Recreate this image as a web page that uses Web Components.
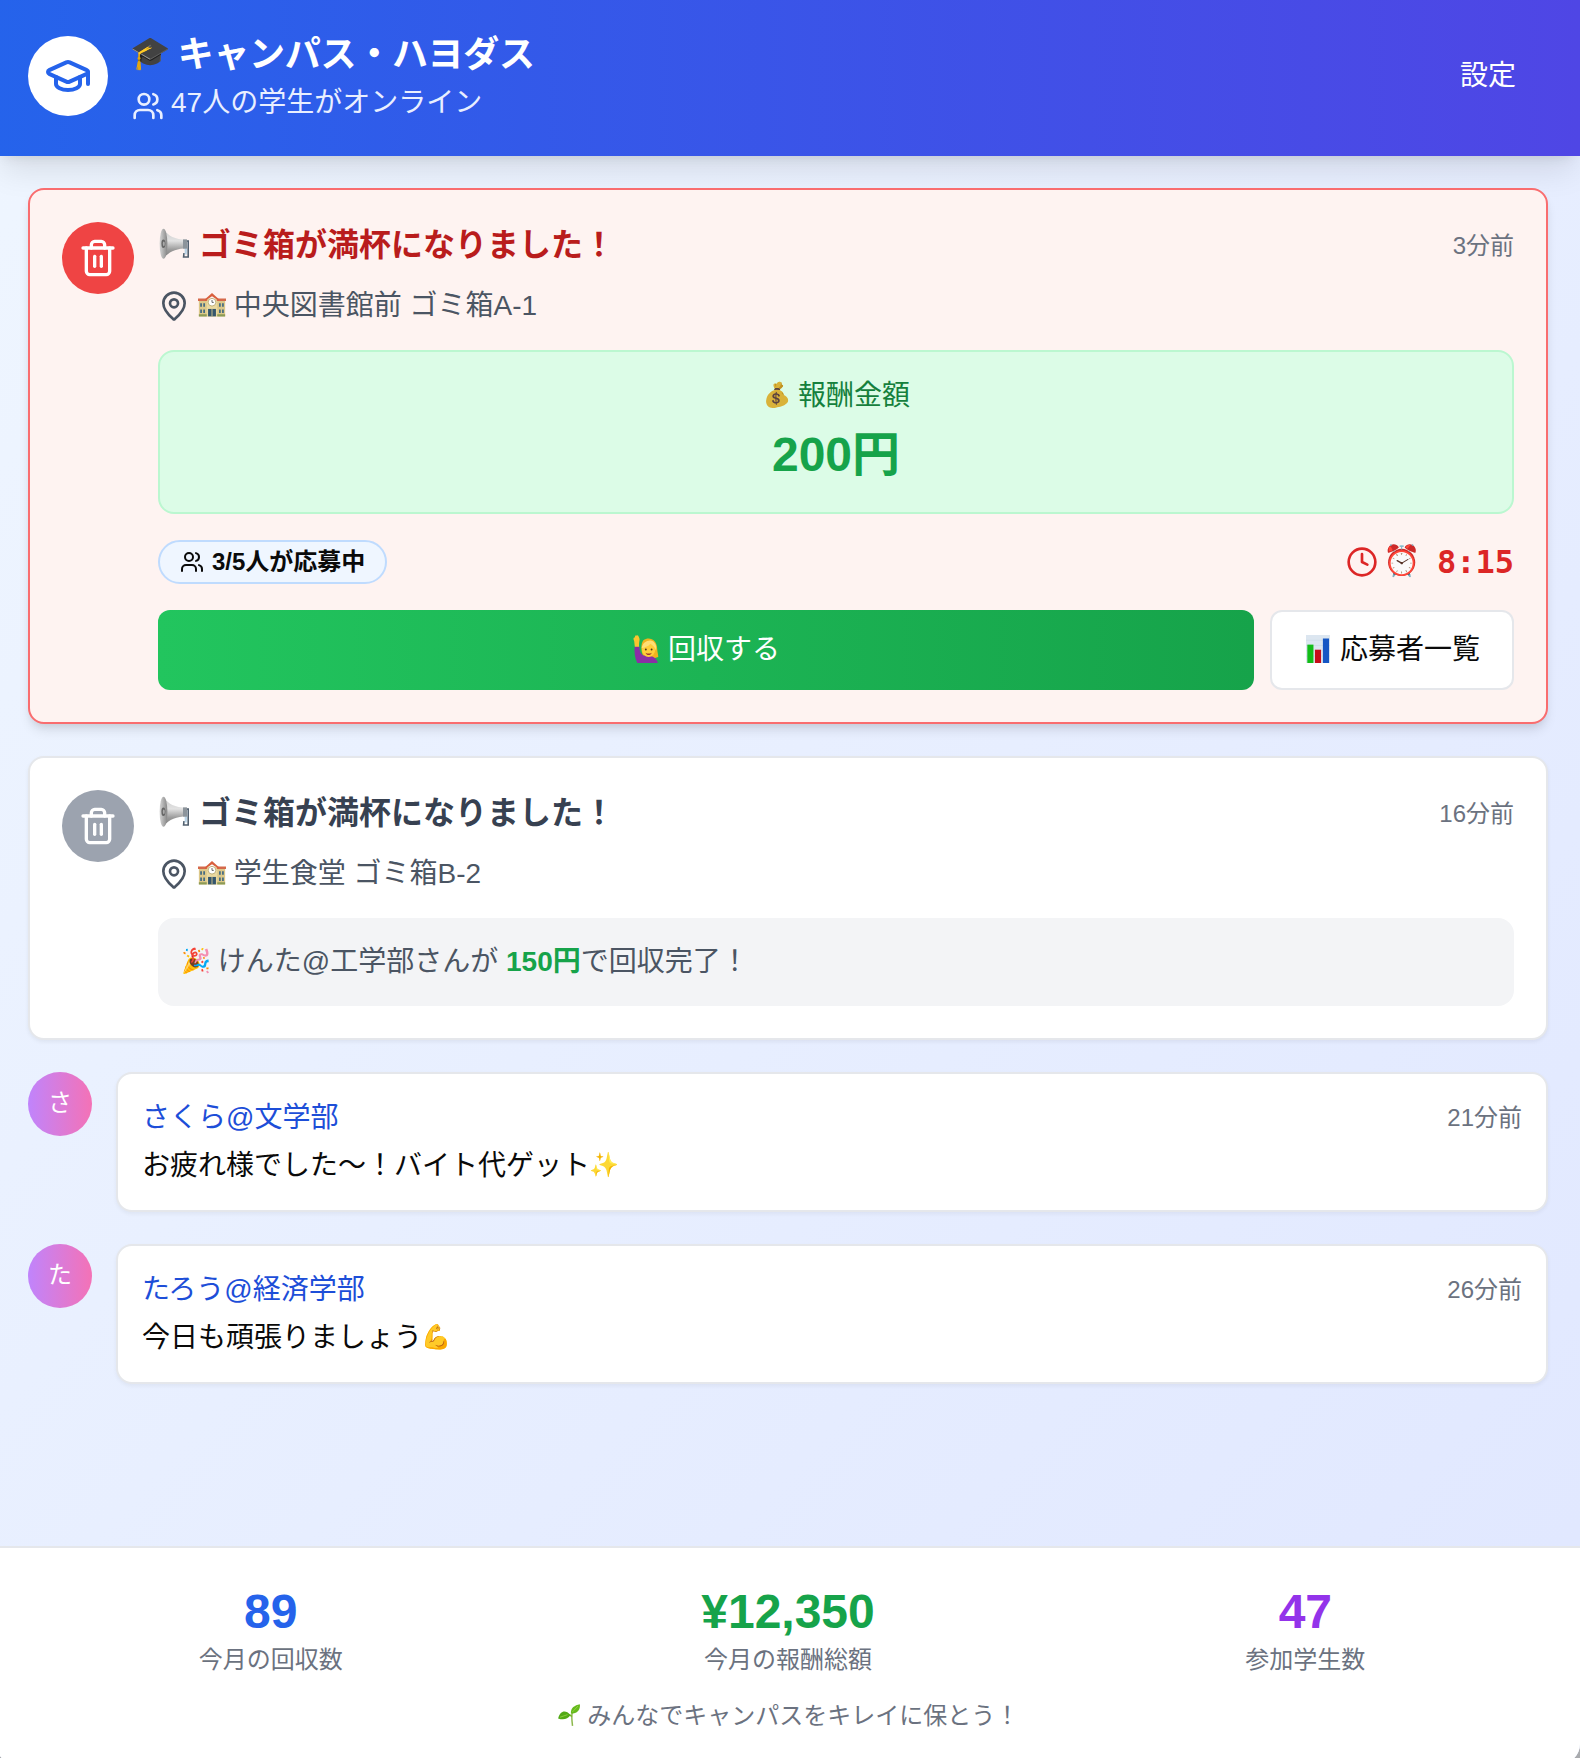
<!DOCTYPE html>
<html lang="ja">
<head>
<meta charset="utf-8">
<title>キャンパス・ハヨダス</title>
<style>
  html, body { margin: 0; height: 1758px; overflow: hidden; background: #a9abae; }
  body { font-family: "Liberation Sans", "Noto Sans CJK JP", sans-serif; font-size: 28px; line-height: 40px; color: #0a0a0a; }
</style>
</head>
<body>
<campus-app>
  <app-header slot="header">
    <span slot="title"><e-moji kind="cap">🎓</e-moji> キャンパス・ハヨダス</span>
    <span slot="status">47人の学生がオンライン</span>
    <span slot="action">設定</span>
  </app-header>

  <bin-alert active>
    <span slot="title"><color-icon name="horn"></color-icon> ゴミ箱が満杯になりました！</span>
    <span slot="time">3分前</span>
    <span slot="place"><color-icon name="school"></color-icon> 中央図書館前 ゴミ箱A-1</span>
    <reward-box><span slot="label"><e-moji kind="bag">💰</e-moji> 報酬金額</span>200円</reward-box>
    <entry-row><span slot="count">3/5人が応募中</span><span slot="timer"><e-moji kind="clock">⏰</e-moji> 8:15</span></entry-row>
    <action-row><span slot="main"><color-icon name="woman"></color-icon> 回収する</span><span slot="side"><color-icon name="chart"></color-icon> 応募者一覧</span></action-row>
  </bin-alert>

  <bin-alert>
    <span slot="title"><color-icon name="horn"></color-icon> ゴミ箱が満杯になりました！</span>
    <span slot="time">16分前</span>
    <span slot="place"><color-icon name="school"></color-icon> 学生食堂 ゴミ箱B-2</span>
    <done-note><e-moji>🎉</e-moji> けんた@工学部さんが <b>150円</b>で回収完了！</done-note>
  </bin-alert>

  <chat-message>
    <span slot="avatar">さ</span><span slot="name">さくら@文学部</span><span slot="time">21分前</span>お疲れ様でした〜！バイト代ゲット<e-moji>✨</e-moji>
  </chat-message>
  <chat-message>
    <span slot="avatar">た</span><span slot="name">たろう@経済学部</span><span slot="time">26分前</span>今日も頑張りましょう<e-moji>💪</e-moji>
  </chat-message>

  <stats-footer slot="footer">
    <stat-item style="--c:#2563eb"><span slot="value">89</span>今月の回収数</stat-item>
    <stat-item style="--c:#16a34a"><span slot="value">¥12,350</span>今月の報酬総額</stat-item>
    <stat-item style="--c:#9333ea"><span slot="value">47</span>参加学生数</stat-item>
    <span slot="note"><color-icon name="sprout"></color-icon> みんなでキャンパスをキレイに保とう！</span>
  </stats-footer>
</campus-app>

<script>
const ICONS = {
  cap: '<path d="M21.42 10.922a1 1 0 0 0-.019-1.838L12.83 5.18a2 2 0 0 0-1.66 0L2.6 9.08a1 1 0 0 0 0 1.832l8.57 3.908a2 2 0 0 0 1.66 0z"/><path d="M22 10v6"/><path d="M6 12.5V16a6 3 0 0 0 12 0v-3.5"/>',
  users: '<path d="M16 21v-2a4 4 0 0 0-4-4H6a4 4 0 0 0-4 4v2"/><circle cx="9" cy="7" r="4"/><path d="M22 21v-2a4 4 0 0 0-3-3.87"/><path d="M16 3.13a4 4 0 0 1 0 7.75"/>',
  trash: '<path d="M3 6h18"/><path d="M19 6v14c0 1-1 2-2 2H7c-1 0-2-1-2-2V6"/><path d="M8 6V4c0-1 1-2 2-2h4c1 0 2 1 2 2v2"/><path d="M10 11v6"/><path d="M14 11v6"/>',
  pin: '<path d="M20 10c0 4.993-5.539 10.193-7.399 11.799a1 1 0 0 1-1.202 0C9.539 20.193 4 14.993 4 10a8 8 0 0 1 16 0"/><circle cx="12" cy="10" r="3"/>',
  clock: '<circle cx="12" cy="12" r="10"/><path d="M12 6v6l4 2"/>'
};
// Multicolour pictures, drawn on a 32-unit grid
const PICTURES = {
  horn: `<defs><linearGradient id="g" x1="0" y1="0" x2="0" y2="1"><stop offset="0" stop-color="#c9c9c9"/><stop offset=".4" stop-color="#e2e2e2"/><stop offset=".7" stop-color="#9b9b9b"/><stop offset="1" stop-color="#787878"/></linearGradient>
    <linearGradient id="b" x1="0" y1="0" x2="1" y2="0"><stop offset="0" stop-color="#d5d5d5"/><stop offset="1" stop-color="#868686"/></linearGradient></defs>
    <path d="M25 13h5.2v16h-4.6l.4-4" fill="none" stroke="#51606f" stroke-width="1.6"/><path d="M26.4 14.5h2.8l-.4 12h-2z" fill="#b9d3e6"/>
    <path d="M5.5 1C10 8 17 11.5 28.5 11.6v8.6C19 20.6 11 23 5.5 30.6z" fill="url(#g)"/><path d="M25 11.4h4v9.2h-4z" fill="#8c949b"/>
    <ellipse cx="5.5" cy="15.8" rx="3.9" ry="15" fill="url(#b)"/><ellipse cx="5.4" cy="15.8" rx="2" ry="4.2" fill="#666"/><ellipse cx="5.8" cy="15.8" rx="1" ry="2.4" fill="#aaa"/>`,
  school: `<rect x="1" y="10" width="30" height="19" fill="#dcc88a"/><rect x="10" y="9" width="12" height="20" fill="#ead9a0"/>
    <path d="M0 8.5h10.5v3H0zM21.500 8.500H32v3H21.500z" fill="#d5694b"/><path d="M16 2.200 24 9.500v1.800L16 6 8 11.300V9.500z" fill="#d95f3d"/>
    <circle cx="16" cy="12.800" r="4.400" fill="#fff" stroke="#a89555" stroke-width=".8"/><path d="M16 10.300v2.700h2" fill="none" stroke="#444" stroke-width=".9"/>
    <path d="M2.500 14h2v4h-2zM6 14h2v4H6zM24 14h2v4h-2zM27.500 14h2v4h-2zM2.500 21h2v4h-2zM6 21h2v4H6zM24 21h2v4h-2zM27.500 21h2v4h-2z" fill="#456b82"/>
    <rect x="11.500" y="20.500" width="9" height="8.500" fill="#35566d"/><path d="M16 20.500V29" stroke="#d9c98f" stroke-width="1"/><path d="M1 26.500h9V29H1zM22 26.500h9V29h-9z" fill="#8d9b55"/>`,
  chart: `<rect x="2.300" y="0" width="27.400" height="32" fill="#dce6f0"/><path d="M2.300 6h27.400M2.300 12h27.400M2.300 18h27.400M2.300 24h27.400" stroke="#c8d6e4" stroke-width=".6"/>
    <rect x="3.800" y="11" width="7" height="21" fill="#12bd18"/><rect x="12.500" y="16.800" width="7" height="15.200" fill="#c70d19"/><rect x="21.600" y="4" width="7" height="28" fill="#1556c4"/>`,
  woman: `<path d="M13 6c7-5 16 0 15.800 10 .2 4 1.200 6 1.200 9-5 2-14 2-17-1-3-5-3-14 0-18z" fill="#f2b31d"/>
    <path d="M3 13h5.500c0 6 1.500 9 5.500 10.500 8-.5 14 1.500 15.500 8.500H6C3 26 2.600 19 3 13z" fill="#8a2fa5"/>
    <path d="M3.200 13.500 2.500 7C1 4 2 2.500 3 3l.8-2.500 1.400 0L6 .3l1.200.6L8.500 4c.6 2-.7 4-.4 9.500z" fill="#fbc52e"/>
    <ellipse cx="19" cy="16.500" rx="7.600" ry="8.700" fill="#ffce3a"/><path d="M11 15c1-8 10-11 14-7 3 3 3 6 2.500 10-1-4-4-6-6.500-8-2 3-6 4-10 5z" fill="#ffdf75"/>
    <circle cx="15.800" cy="16.500" r="1.100" fill="#54351b"/><circle cx="22.400" cy="16.500" r="1.100" fill="#54351b"/><path d="M15.500 20.200c2 1.300 5 1.300 7 0-.8 3.500-6 3.500-7 0z" fill="#a3392a"/>`,
  sprout: `<path d="M20.500 12c-1.500 5-.8 11 .2 18.500" fill="none" stroke="#8cb84c" stroke-width="2"/><path d="M20 18c-2-2-4-3-7-2" fill="none" stroke="#79b52a" stroke-width="2"/>
    <path d="M18.500 14c-.5-8 5-11 12-12.500C31.500 9 27 14 18.500 14z" fill="#66ba1d"/><path d="M18 16C11 8 4 11 1.500 20.500 8 23 14 22 18 16z" fill="#52a916"/>
    <path d="M20.500 12 28 4M4 19l10-3.500" stroke="#9bd94a" stroke-width="1"/>`
};
const define = (name, html, setup) => customElements.define(name, class extends HTMLElement {
  constructor() { super(); this.attachShadow({ mode: 'open' }); }
  connectedCallback() {
    this.shadowRoot.innerHTML = html;
    if (setup) setup(this);
  }
});

define('line-icon', `<style>
  :host { display: block; flex: none; width: var(--s, 32px); height: var(--s, 32px); }
  svg { display: block; width: 100%; height: 100%; fill: none; stroke: currentColor; stroke-width: 2; stroke-linecap: round; stroke-linejoin: round; }
</style><svg viewBox="0 0 24 24"></svg>`, el => {
  el.shadowRoot.querySelector('svg').innerHTML = ICONS[el.getAttribute('name')];
});

define('color-icon', `<style>
  :host { display: inline-block; width: 1em; height: 1em; vertical-align: -.13em; }
  svg { display: block; width: 100%; height: 100%; }
</style><svg viewBox="0 0 32 32"></svg>`, el => {
  el.shadowRoot.querySelector('svg').innerHTML = PICTURES[el.getAttribute('name')];
});

define('e-moji', `<style>
  :host { display: inline-flex; width: 1em; height: 1em; line-height: 1em; justify-content: center; vertical-align: .06em; white-space: nowrap; }
  span { display: block; font-size: .86em; font-family: "Noto Color Emoji", sans-serif; font-weight: 400; }
  :host([kind="cap"]) { vertical-align: .09em; }
  :host([kind="cap"]) span { font-size: .9em; }
  :host([kind="bag"]) span { font-size: .8em; transform: rotate(-14deg); filter: brightness(.88) saturate(.85); }
  :host([kind="clock"]) span { font-size: .94em; }
</style><span><slot></slot></span>`);

define('campus-app', `<style>
  :host { display: flex; flex-direction: column; box-sizing: border-box; width: 1584px; height: 1768px; margin: -4px 0 0 -4px;
    background: linear-gradient(to bottom right, #eff6ff, #e0e7ff); border-radius: 0 0 20px 20px; overflow: hidden; }
  main { flex: 1; display: flex; flex-direction: column; gap: 32px; padding: 32px; }
</style><slot name="header"></slot><main><slot></slot></main><slot name="footer"></slot>`);

define('app-header', `<style>
  :host { display: flex; align-items: center; gap: 24px; padding: 32px; height: 96px; color: #fff;
    background: linear-gradient(to right, #2563eb, #4f46e5); box-shadow: 0 20px 30px -6px rgb(0 0 0 / .1), 0 8px 12px -8px rgb(0 0 0 / .1); }
  .logo { --s: 48px; display: grid; place-items: center; width: 80px; height: 80px; border-radius: 50%; background: #fff; color: #2563eb; }
  .text { flex: 1; }
  .title { font-size: 36px; line-height: 54px; height: 56px; font-weight: 700; letter-spacing: -.3px; }
  .status { display: flex; gap: 7px; color: #e9efff; line-height: 38px; height: 40px; }
  .status line-icon { margin-top: 6px; }
  .action { padding: 0 32px; }
</style>
<div class="logo"><line-icon name="cap"></line-icon></div>
<div class="text"><div class="title"><slot name="title"></slot></div>
<div class="status"><line-icon name="users"></line-icon><slot name="status"></slot></div></div>
<div class="action"><slot name="action"></slot></div>`);

define('bin-alert', `<style>
  :host { display: flex; gap: 24px; padding: 32px; border: 2px solid #e5e7eb; border-radius: 16px; background: #fff;
    --badge: #9ca3af; --title: #374151; box-shadow: 0 2px 4px rgb(0 0 0 / .06); }
  :host([active]) { border-color: #f96d6f; background: #fef3f1; --badge: #ef4444; --title: #b91c1c;
    box-shadow: 0 8px 12px -2px rgb(0 0 0 / .1), 0 4px 8px -4px rgb(0 0 0 / .1); }
  .badge { --s: 40px; flex: none; display: grid; place-items: center; width: 72px; height: 72px; border-radius: 50%; background: var(--badge); color: #fff; }
  .body { flex: 1; display: flex; flex-direction: column; gap: 24px; }
  .head { display: flex; justify-content: space-between; align-items: center; line-height: 48px; margin-bottom: 16px; }
  .title { font-size: 32px; line-height: 46px; height: 48px; font-weight: 700; color: var(--title); }
  .time { height: 48px; line-height: 47px; font-size: 24px; color: #6b7280; }
  .place { display: flex; align-items: center; gap: 8px; color: #4b5563; }
</style>
<div class="badge"><line-icon name="trash"></line-icon></div>
<div class="body"><div><div class="head"><div class="title"><slot name="title"></slot></div><div class="time"><slot name="time"></slot></div></div>
<div class="place"><line-icon name="pin"></line-icon><slot name="place"></slot></div></div><slot></slot></div>`);

define('reward-box', `<style>
  :host { display: block; padding: 24px; text-align: center; border: 2px solid #bbf7d0; border-radius: 16px; background: #dcfce7; }
  .label { color: #15803d; margin-bottom: 8px; }
  .value { font-size: 48px; line-height: 62px; height: 64px; font-weight: 700; color: #16a34a; }
</style><div class="label"><slot name="label"></slot></div><div class="value"><slot></slot></div>`);

define('entry-row', `<style>
  :host { display: flex; justify-content: space-between; align-items: center; height: 48px; }
  .count { --s: 24px; display: flex; align-items: center; gap: 8px; box-sizing: border-box; height: 44px; padding: 0 20px; border: 2px solid #bfdbfe; border-radius: 22px;
    background: #eff6ff; font-size: 24px; font-weight: 700; line-height: 32px; }
  .timer { display: flex; align-items: center; gap: 8px; font: 700 32px/48px "DejaVu Sans Mono", monospace; color: #dc2626; }
</style><div class="count"><line-icon name="users"></line-icon><slot name="count"></slot></div>
<div class="timer"><line-icon name="clock"></line-icon><slot name="timer"></slot></div>`);

define('action-row', `<style>
  :host { display: flex; gap: 16px; }
  div { box-sizing: border-box; height: 80px; line-height: 76px; border-radius: 12px; text-align: center; }
  .main { flex: 1; background: linear-gradient(to right, #22c55e, #16a34a); color: #fff; border-top: 2px solid transparent; background-origin: border-box; }
  .side { padding: 0 32px; background: #fff; border: 2px solid #e5e7eb; }
</style><div class="main"><slot name="main"></slot></div><div class="side"><slot name="side"></slot></div>`);

define('done-note', `<style>
  :host { display: block; height: 40px; line-height: 39px; padding: 24px; border-radius: 16px; background: #f3f4f6; color: #4b5563; }
  ::slotted(b) { color: #16a34a; }
</style><slot></slot>`);

define('chat-message', `<style>
  :host { display: flex; gap: 24px; align-items: flex-start; }
  .avatar { width: 64px; height: 64px; line-height: 62px; text-align: center; font-size: 24px; border-radius: 50%; color: #fff; background: linear-gradient(to right, #c084fc, #f472b6); }
  .bubble { flex: 1; padding: 24px; border: 2px solid #e5e7eb; border-radius: 16px; background: #fff; box-shadow: 0 2px 4px rgb(0 0 0 / .05); }
  .head { display: flex; justify-content: space-between; margin-bottom: 8px; }
  .name { color: #1d4ed8; }
  .time { font-size: 24px; color: #6b7280; }
</style><div class="avatar"><slot name="avatar"></slot></div>
<div class="bubble"><div class="head"><div class="name"><slot name="name"></slot></div><div class="time"><slot name="time"></slot></div></div><div><slot></slot></div></div>`);

define('stats-footer', `<style>
  :host { display: block; height: 184px; padding: 32px 32px 0; border-top: 2px solid #e5e7eb; background: #fff; }
  .grid { display: grid; grid-template-columns: repeat(3, 1fr); gap: 32px; }
  .note { margin-top: 24px; text-align: center; font-size: 24px; line-height: 31px; color: #6b7280; }
</style><div class="grid"><slot></slot></div><div class="note"><slot name="note"></slot></div>`);

define('stat-item', `<style>
  :host { display: block; text-align: center; font-size: 24px; line-height: 32px; color: #6b7280; }
  .value { font-size: 48px; line-height: 64px; font-weight: 700; color: var(--c); }
</style><div class="value"><slot name="value"></slot></div><slot></slot>`);
</script>
</body>
</html>
